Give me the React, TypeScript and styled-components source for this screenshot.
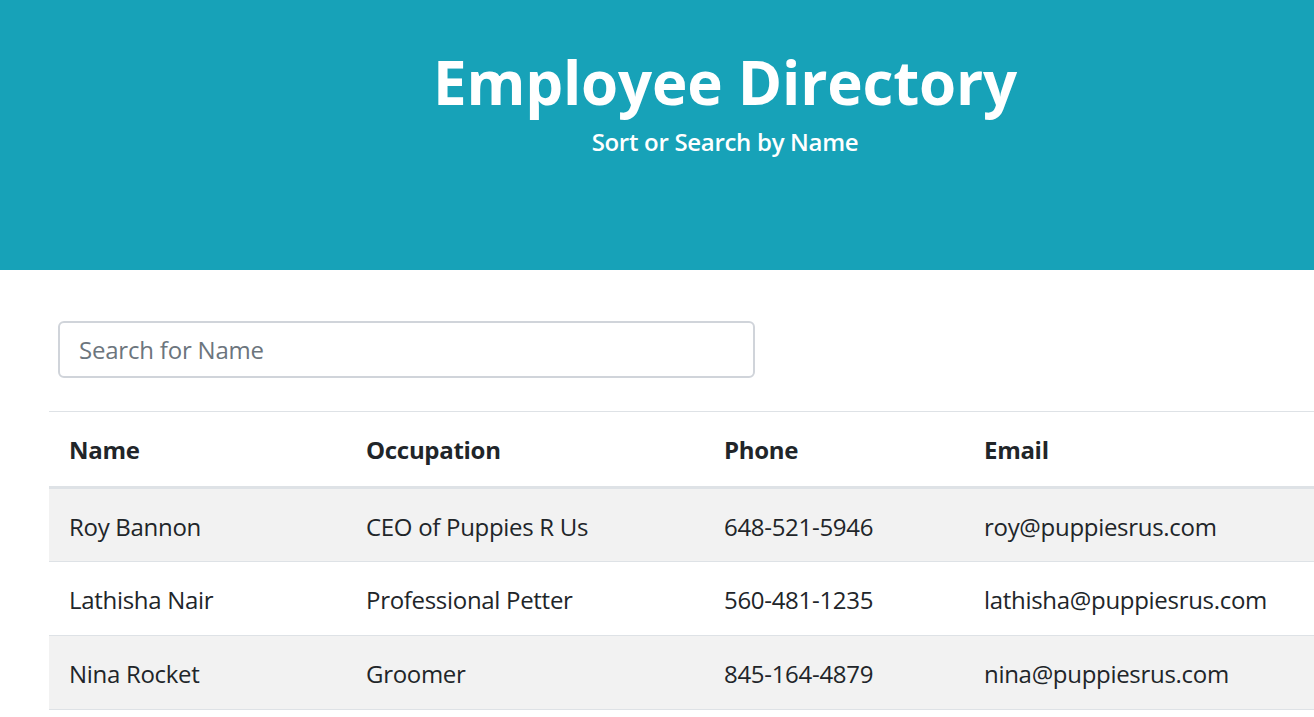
import React from 'react'
import styled, { createGlobalStyle } from 'styled-components'

const GlobalStyle = createGlobalStyle`
  html, body {
    margin: 0;
    padding: 0;
    overflow: hidden;
    background: #ffffff;
  }
  body {
    font-family: 'Open Sans', 'Noto Sans', sans-serif;
    color: #212529;
  }
`

const PageStyled = styled.div`
  width: 1450px;
`

const HeaderStyled = styled.header`
  height: 270px;
  box-sizing: border-box;
  padding-top: 46px;
  background: #17a2b8;
  color: #ffffff;
  text-align: center;
`

const TitleStyled = styled.h1`
  margin: 0;
  font-size: 60px;
  font-weight: 700;
  line-height: 72px;
  letter-spacing: -0.2px;
`

const SubtitleStyled = styled.p`
  margin: 6px 0 0;
  font-size: 24px;
  font-weight: 600;
  line-height: 36px;
  letter-spacing: -0.3px;
`

const MainStyled = styled.main`
  padding: 51px 49px 0;
`

const FormStyled = styled.form`
  padding: 0 9px;
  margin-bottom: 33px;
`

const SearchInputStyled = styled.input`
  display: block;
  box-sizing: border-box;
  width: 697px;
  height: 57px;
  padding: 0 19px;
  border: 2px solid #d0d4da;
  border-radius: 6px;
  font-family: inherit;
  font-size: 24px;
  color: #495057;
  outline: none;

  &::placeholder {
    color: #6c757d;
    letter-spacing: -0.2px;
  }
`

const TableStyled = styled.table`
  width: 100%;
  border-collapse: collapse;
  font-size: 24px;
  letter-spacing: -0.3px;
`

const HeadCellStyled = styled.th<{ $width?: number }>`
  width: ${props => (props.$width ? `${props.$width}px` : 'auto')};
  box-sizing: border-box;
  padding: 18px 20px;
  height: 76px;
  text-align: left;
  font-weight: 700;
  border-top: 1.5px solid #dee2e6;
  border-bottom: 3px solid #dee2e6;
`

const RowStyled = styled.tr<{ $striped: boolean }>`
  background: ${props => (props.$striped ? '#f2f2f2' : '#ffffff')};
`

const CellStyled = styled.td`
  box-sizing: border-box;
  height: 74px;
  padding: 2px 20px 0;
  border-bottom: 1.5px solid #dee2e6;
  font-weight: 400;
`

const employees = [
  { name: 'Roy Bannon', occupation: 'CEO of Puppies R Us', phone: '648-521-5946', email: 'roy@puppiesrus.com' },
  { name: 'Lathisha Nair', occupation: 'Professional Petter', phone: '560-481-1235', email: 'lathisha@puppiesrus.com' },
  { name: 'Nina Rocket', occupation: 'Groomer', phone: '845-164-4879', email: 'nina@puppiesrus.com' },
]

function App() {
  return (
    <PageStyled>
      <GlobalStyle />
      <HeaderStyled>
        <TitleStyled>Employee Directory</TitleStyled>
        <SubtitleStyled>Sort or Search by Name</SubtitleStyled>
      </HeaderStyled>
      <MainStyled>
        <FormStyled onSubmit={e => e.preventDefault()}>
          <SearchInputStyled type="text" placeholder="Search for Name" />
        </FormStyled>
        <TableStyled>
          <thead>
            <tr>
              <HeadCellStyled $width={297}>Name</HeadCellStyled>
              <HeadCellStyled $width={358}>Occupation</HeadCellStyled>
              <HeadCellStyled $width={260}>Phone</HeadCellStyled>
              <HeadCellStyled>Email</HeadCellStyled>
            </tr>
          </thead>
          <tbody>
            {employees.map((employee, index) => (
              <RowStyled key={employee.email} $striped={index % 2 === 0}>
                <CellStyled>{employee.name}</CellStyled>
                <CellStyled>{employee.occupation}</CellStyled>
                <CellStyled>{employee.phone}</CellStyled>
                <CellStyled>{employee.email}</CellStyled>
              </RowStyled>
            ))}
          </tbody>
        </TableStyled>
      </MainStyled>
    </PageStyled>
  )
}

export default App
